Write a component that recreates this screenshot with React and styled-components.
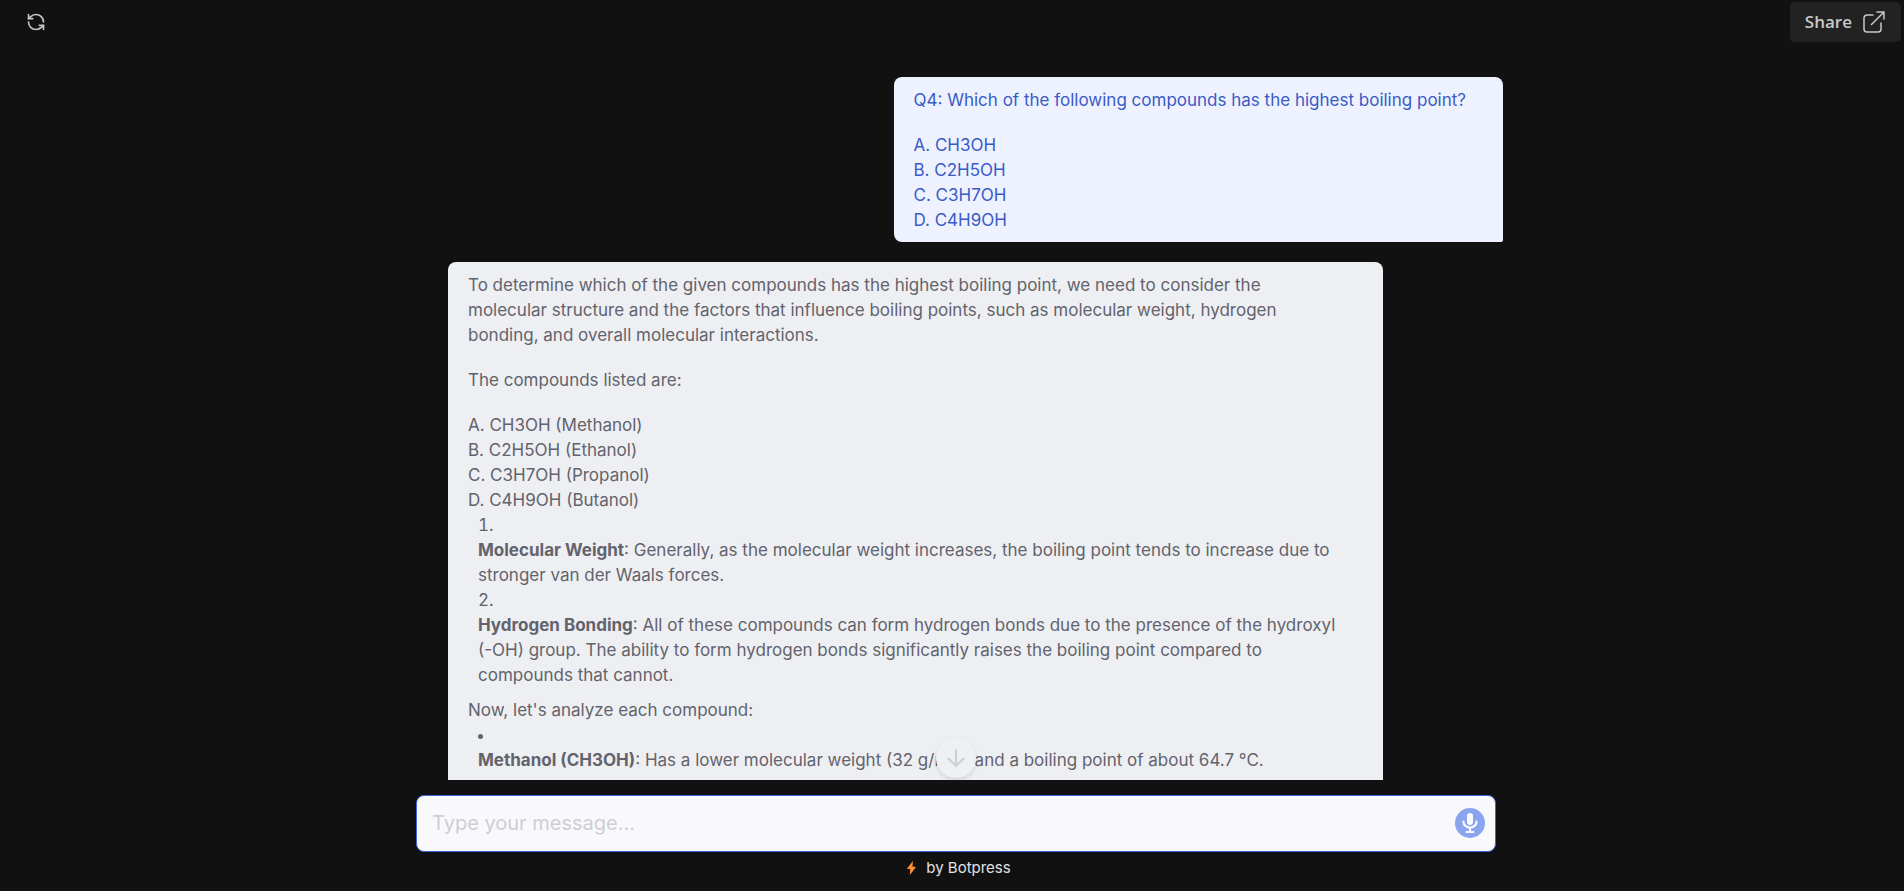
import React from "react";
import styled, { createGlobalStyle } from "styled-components";
import { RefreshCcw } from "lucide-react";

const GlobalStyle = createGlobalStyle`
  *, *::before, *::after { box-sizing: border-box; }
  body { margin: 0; background: #111111; }
  p, ol, ul { margin: 0; padding: 0; }
  button { font: inherit; border: 0; padding: 0; cursor: pointer; }
`;

const Page = styled.div`
  height: 100vh;
  display: flex;
  flex-direction: column;
  background: #111111;
  font-family: Inter, "Liberation Sans", sans-serif;
`;

const Header = styled.header`
  display: flex;
  align-items: center;
  justify-content: space-between;
  padding: 2px 3px 0 26px;
`;

const IconButton = styled.button`
  display: flex;
  background: transparent;
  color: #c4c4c4;
`;

const ShareButton = styled.button`
  display: flex;
  align-items: center;
  gap: 11px;
  height: 40px;
  padding: 0 16px 0 15px;
  border-radius: 5px;
  background: #222222;
  color: #c8c8c8;

  && {
    font: 600 17px/24px "Open Sans", "Noto Sans", sans-serif;
  }
`;

const Chat = styled.main`
  flex: 1;
  min-height: 0;
  display: flex;
  flex-direction: column;
  align-items: center;
  padding: 35px 0 0 8px;
`;

const MessageArea = styled.div`
  position: relative;
  flex: 1;
  min-height: 0;
  width: 100%;
  max-width: 1120px;
  overflow: hidden;
`;

const MessageList = styled.div`
  display: flex;
  flex-direction: column;
  gap: 20px;
  padding: 0 13px 0 52px;
`;

const Bubble = styled.article`
  align-self: ${(p) => (p.$own ? "flex-end" : "flex-start")};
  max-width: 935px;
  padding: ${(p) => (p.$own ? "11px 37px 9px 20px" : "11px 43px 24px 20px")};
  border-radius: ${(p) => (p.$own ? "8px 8px 2px 8px" : "8px 8px 8px 2px")};
  background: ${(p) => (p.$own ? "#edf2fe" : "#eeeff3")};
  color: ${(p) => (p.$own ? "#3a5bc7" : "#62636c")};
  font-size: 17px;
  line-height: 25px;
`;

const Paragraph = styled.p`
  margin-top: ${(p) => p.$gap || 0}px;
`;

const List = styled.ul`
  padding-left: 10px;
  list-style-position: inside;
  list-style-type: ${(p) => (p.$numbered ? "decimal" : "disc")};
`;

const Strong = styled.strong`
  font-weight: 700;
`;

const ScrollButton = styled.button`
  position: absolute;
  bottom: 2px;
  left: 50%;
  transform: translateX(-50%);
  display: flex;
  align-items: center;
  justify-content: center;
  width: 40px;
  height: 40px;
  border-radius: 50%;
  background: #eff0f3;
  color: #cdced7;
  box-shadow: 0 2px 4px rgba(0, 0, 0, 0.12);
`;

const Composer = styled.form`
  display: flex;
  align-items: center;
  width: 100%;
  max-width: 1080px;
  height: 57px;
  margin-top: 15px;
  padding: 0 10px 2px 15px;
  border: 1px solid #3e63dd;
  border-radius: 8px;
  background: #f9f9fb;
`;

const MessageInput = styled.input`
  flex: 1;
  min-width: 0;
  padding: 0;
  border: 0;
  outline: 0;
  background: transparent;
  color: #62636c;
  font: 400 20px/28px Inter, sans-serif;

  &::placeholder {
    color: #cdced7;
    opacity: 1;
  }
`;

const MicButton = styled.button`
  display: flex;
  align-items: center;
  justify-content: center;
  width: 30px;
  height: 30px;
  border-radius: 50%;
  background: #8aa4ef;
`;

const Footer = styled.footer`
  display: flex;
  justify-content: center;
  padding: 6px 0 13px 14px;
`;

const FooterLink = styled.a`
  display: flex;
  align-items: center;
  gap: 10px;
  color: #e0e1e6;
  font-size: 15px;
  line-height: 20px;
  text-decoration: none;
`;

function ShareIcon() {
  return (
    <svg width="22" height="22" viewBox="0 0 22 22" fill="none" stroke="currentColor" strokeWidth="1.5" strokeLinecap="round" strokeLinejoin="round" aria-hidden="true">
      <path d="M10 4H4a3 3 0 0 0-3 3v11a3 3 0 0 0 3 3h11a3 3 0 0 0 3-3v-6" />
      <path d="M8.500 13.500 21 1M14 1h7v7" />
    </svg>
  );
}

function ArrowDownIcon() {
  return (
    <svg width="24" height="24" viewBox="0 0 24 24" fill="none" stroke="currentColor" strokeWidth="2" strokeLinecap="round" strokeLinejoin="round" aria-hidden="true">
      <path d="M12 4v16M4.500 12.500 12 20l7.500-7.500" />
    </svg>
  );
}

function MicIcon() {
  return (
    <svg width="16" height="22" viewBox="0 0 16 22" fill="none" stroke="#f9f9fb" strokeLinecap="round" aria-hidden="true">
      <rect x="5" y="1" width="6" height="12" rx="3" fill="#f9f9fb" stroke="none" />
      <path d="M1.500 9.500v.5a6.500 5.500 0 0 0 13 0v-.5M8 16v4M4.500 20h7" strokeWidth="2.200" />
    </svg>
  );
}

function BoltIcon() {
  return (
    <svg width="9" height="14" viewBox="0 0 9 14" fill="#ff8c34" aria-hidden="true">
      <path d="M5.800 0 .3 7.200c-.3.500-.1.900.4.900h2.500L2.800 14l5.700-7.300c.4-.5.200-1-.4-1H5.600Z" />
    </svg>
  );
}

export default function App() {
  return (
    <>
      <GlobalStyle />
      <Page>
        <Header>
          <IconButton type="button" aria-label="Restart conversation">
            <RefreshCcw size={20} strokeWidth={2} />
          </IconButton>
          <ShareButton type="button">
            Share
            <ShareIcon />
          </ShareButton>
        </Header>
        <Chat>
          <MessageArea>
            <MessageList>
              <Bubble $own>
                <Paragraph>Q4: Which of the following compounds has the highest boiling point?</Paragraph>
                <Paragraph $gap={20}>
                  A. CH3OH
                  <br />
                  B. C2H5OH
                  <br />
                  C. C3H7OH
                  <br />
                  D. C4H9OH
                </Paragraph>
              </Bubble>
              <Bubble>
                <Paragraph>
                  To determine which of the given compounds has the highest boiling point, we need to consider the
                  molecular structure and the factors that influence boiling points, such as molecular weight, hydrogen
                  bonding, and overall molecular interactions.
                </Paragraph>
                <Paragraph $gap={20}>The compounds listed are:</Paragraph>
                <Paragraph $gap={20}>
                  A. CH3OH (Methanol)
                  <br />
                  B. C2H5OH (Ethanol)
                  <br />
                  C. C3H7OH (Propanol)
                  <br />
                  D. C4H9OH (Butanol)
                </Paragraph>
                <List as="ol" $numbered>
                  <li>
                    <Paragraph>
                      <Strong>Molecular Weight</Strong>: Generally, as the molecular weight increases, the boiling point
                      tends to increase due to stronger van der Waals forces.
                    </Paragraph>
                  </li>
                  <li>
                    <Paragraph>
                      <Strong>Hydrogen Bonding</Strong>: All of these compounds can form hydrogen bonds due to the
                      presence of the hydroxyl (-OH) group. The ability to form hydrogen bonds significantly raises the
                      boiling point compared to compounds that cannot.
                    </Paragraph>
                  </li>
                </List>
                <Paragraph $gap={10}>Now, let's analyze each compound:</Paragraph>
                <List>
                  <li>
                    <Paragraph>
                      <Strong>Methanol (CH3OH)</Strong>: Has a lower molecular weight (32 g/mol) and a boiling point of
                      about 64.7 °C.
                    </Paragraph>
                  </li>
                </List>
              </Bubble>
            </MessageList>
            <ScrollButton type="button" aria-label="Scroll to latest message">
              <ArrowDownIcon />
            </ScrollButton>
          </MessageArea>
          <Composer onSubmit={(e) => e.preventDefault()}>
            <MessageInput type="text" aria-label="Message" placeholder="Type your message..." />
            <MicButton type="button" aria-label="Record voice message">
              <MicIcon />
            </MicButton>
          </Composer>
        </Chat>
        <Footer>
          <FooterLink href="#botpress">
            <BoltIcon />
            by Botpress
          </FooterLink>
        </Footer>
      </Page>
    </>
  );
}
